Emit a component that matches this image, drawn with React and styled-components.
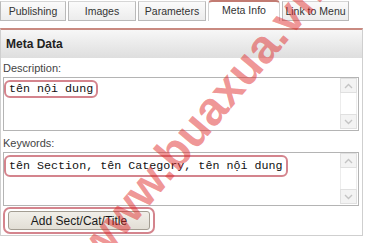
import React from "react";
import styled, { createGlobalStyle } from "styled-components";

const GlobalStyle = createGlobalStyle`
  html, body {
    margin: 0;
    padding: 0;
    background: #ffffff;
  }
  body {
    font-family: "Liberation Sans", Arial, sans-serif;
  }
`;

const tabs = [
  { label: "Publishing", width: 66 },
  { label: "Images", width: 68 },
  { label: "Parameters", width: 68 },
  { label: "Meta Info", width: 72, active: true },
  { label: "Link to Menu", width: 67 },
];

const Arrow = ({ down }) => (
  <svg width="9" height="6" viewBox="0 0 9 6">
    <path
      d={down ? "M1 1 L4.5 4.5 L8 1" : "M1 5 L4.5 1.5 L8 5"}
      fill="none"
      stroke="#c4c4c4"
      strokeWidth="1.4"
    />
  </svg>
);

const TextField = ({ children }) => (
  <Field>
    <FieldText>{children}</FieldText>
    <ScrollBar>
      <ScrollButton>
        <Arrow />
      </ScrollButton>
      <ScrollTrack />
      <ScrollButton>
        <Arrow down />
      </ScrollButton>
    </ScrollBar>
  </Field>
);

const App = () => {
  return (
    <>
      <GlobalStyle />
      <Page>
        <TabBar>
          {tabs.map((t) => (
            <Tab key={t.label} $active={t.active} $width={t.width}>
              {t.label}
            </Tab>
          ))}
        </TabBar>
        <Panel>
          <Header>Meta Data</Header>
          <Body>
            <Label>Description:</Label>
            <TextField>
              <Mark>tên nội dung</Mark>
            </TextField>
            <Label>Keywords:</Label>
            <TextField>
              <Mark $tall>tên Section, tên Category, tên nội dung</Mark>
            </TextField>
            <ButtonRing>
              <Button type="button">Add Sect/Cat/Title</Button>
            </ButtonRing>
          </Body>
        </Panel>
        <Watermark>www.buaxua.vn</Watermark>
      </Page>
    </>
  );
};

export default App;

const Page = styled.div`
  position: relative;
  width: 371px;
  height: 243px;
  overflow: hidden;
  background: #ffffff;
`;

const TabBar = styled.div`
  display: flex;
  align-items: flex-end;
  gap: 2px;
  height: 21px;
`;

const Tab = styled.div`
  box-sizing: border-box;
  width: ${(p) => p.$width}px;
  height: ${(p) => (p.$active ? 21 : 20)}px;
  display: flex;
  align-items: center;
  justify-content: center;
  font-size: 10.5px;
  white-space: nowrap;
  color: #333333;
  border: 1px solid ${(p) => (p.$active ? "#d2d2d2" : "#b9b9b9")};
  border-top: ${(p) => (p.$active ? "2px solid #c27b72" : "1px solid #d6d6d6")};
  border-bottom: ${(p) => (p.$active ? "none" : "1px solid #b9b9b9")};
  border-radius: ${(p) => (p.$active ? "4px 4px 0 0" : "0")};
  background: ${(p) =>
    p.$active ? "#ffffff" : "linear-gradient(#fbfbfb, #ececec)"};
  padding-bottom: ${(p) => (p.$active ? 3 : 0)}px;
`;

const Panel = styled.div`
  box-sizing: border-box;
  margin-top: 7px;
  width: 363px;
  border: 1px solid #cfcfcf;
  border-top: 2px solid #c98a81;
`;

const Header = styled.div`
  height: 28px;
  display: flex;
  align-items: center;
  padding-left: 5px;
  font-size: 12px;
  font-weight: bold;
  color: #222222;
  background: linear-gradient(#f7f7f7, #dedede);
`;

const Body = styled.div`
  padding: 4px 3px 1px 2px;
`;

const Label = styled.div`
  font-size: 11px;
  line-height: 13px;
  color: #444444;
  margin-bottom: 2px;
  margin-top: 6px;

  &:first-child {
    margin-top: 0;
  }
`;

const Field = styled.div`
  box-sizing: border-box;
  display: flex;
  height: 54px;
  border: 1px solid #b4b4b4;
  background: #ffffff;
`;

const FieldText = styled.div`
  flex: 1;
  padding: 2px 0 0 0;
  font-family: "Liberation Mono", "Courier New", monospace;
  font-size: 11.7px;
  color: #111111;
`;

const Mark = styled.span`
  display: inline-block;
  padding: ${(p) => (p.$tall ? "2px 3px" : "0 3px")};
  line-height: 14px;
  border: 2px solid rgba(201, 101, 112, 0.8);
  border-radius: 6px;
`;

const ScrollBar = styled.div`
  width: 17px;
  margin: 0 1px 1px 0;
  display: flex;
  flex-direction: column;
`;

const ScrollButton = styled.div`
  box-sizing: border-box;
  height: 15px;
  display: flex;
  align-items: center;
  justify-content: center;
  border: 1px solid #e0e0e0;
  background: #f3f3f3;
`;

const ScrollTrack = styled.div`
  flex: 1;
  border-left: 1px solid #ececec;
  border-right: 1px solid #ececec;
  background: #ffffff;
`;

const ButtonRing = styled.div`
  display: inline-block;
  margin-top: 1px;
  padding: 2px 3px;
  border: 2px solid rgba(201, 101, 112, 0.8);
  border-radius: 7px;
`;

const Button = styled.button`
  display: block;
  width: 142px;
  height: 19px;
  padding: 0;
  font-family: "Liberation Sans", Arial, sans-serif;
  font-size: 12px;
  color: #1a1a1a;
  background: linear-gradient(#f1efe9, #e2ded5);
  border: 1px solid #a39d92;
  border-radius: 3px;
`;

const Watermark = styled.div`
  position: absolute;
  left: 200px;
  top: 120px;
  transform: translate(-50%, -50%) rotate(-50deg);
  font-family: "Liberation Sans", Arial, sans-serif;
  font-size: 47px;
  font-weight: bold;
  white-space: nowrap;
  color: rgba(222, 35, 35, 0.48);
  pointer-events: none;
`;
